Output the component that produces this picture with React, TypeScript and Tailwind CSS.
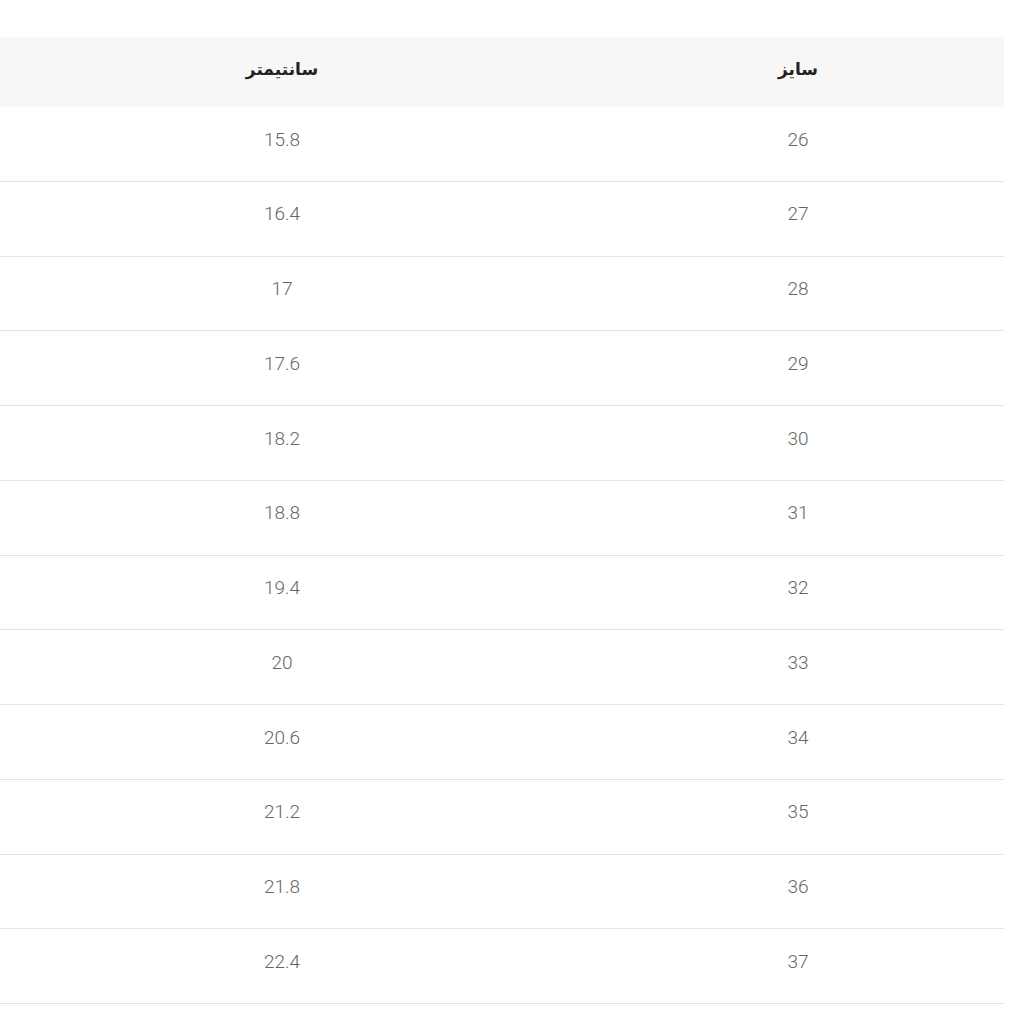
import React from "react";

const rows: [string, string][] = [
  ["26", "15.8"],
  ["27", "16.4"],
  ["28", "17"],
  ["29", "17.6"],
  ["30", "18.2"],
  ["31", "18.8"],
  ["32", "19.4"],
  ["33", "20"],
  ["34", "20.6"],
  ["35", "21.2"],
  ["36", "21.8"],
  ["37", "22.4"],
];

export default function App() {
  return (
    <div className="w-[1024px] h-[1024px] bg-white overflow-hidden">
      <div className="pt-[37px] ml-[-28px] w-[1032px]" dir="rtl">
        <div className="grid grid-cols-[412px_620px] h-[70px] bg-[#f7f7f7] items-center text-[17px] font-bold text-[#222]" style={{ fontFamily: '"DejaVu Sans", sans-serif' }}>
          <div className="text-center pb-[4px]">سایز</div>
          <div className="text-center pb-[4px]">سانتیمتر</div>
        </div>
        {rows.map(([size, cm]) => (
          <div
            key={size}
            className="grid grid-cols-[412px_620px] h-[74.75px] border-b border-[#e3e3e3] items-center text-[19px] font-light text-[#666]"
            style={{ fontFamily: 'Roboto, "Liberation Sans", sans-serif' }}
          >
            <div className="text-center pb-[8px]">{size}</div>
            <div className="text-center pb-[8px]">{cm}</div>
          </div>
        ))}
      </div>
    </div>
  );
}
